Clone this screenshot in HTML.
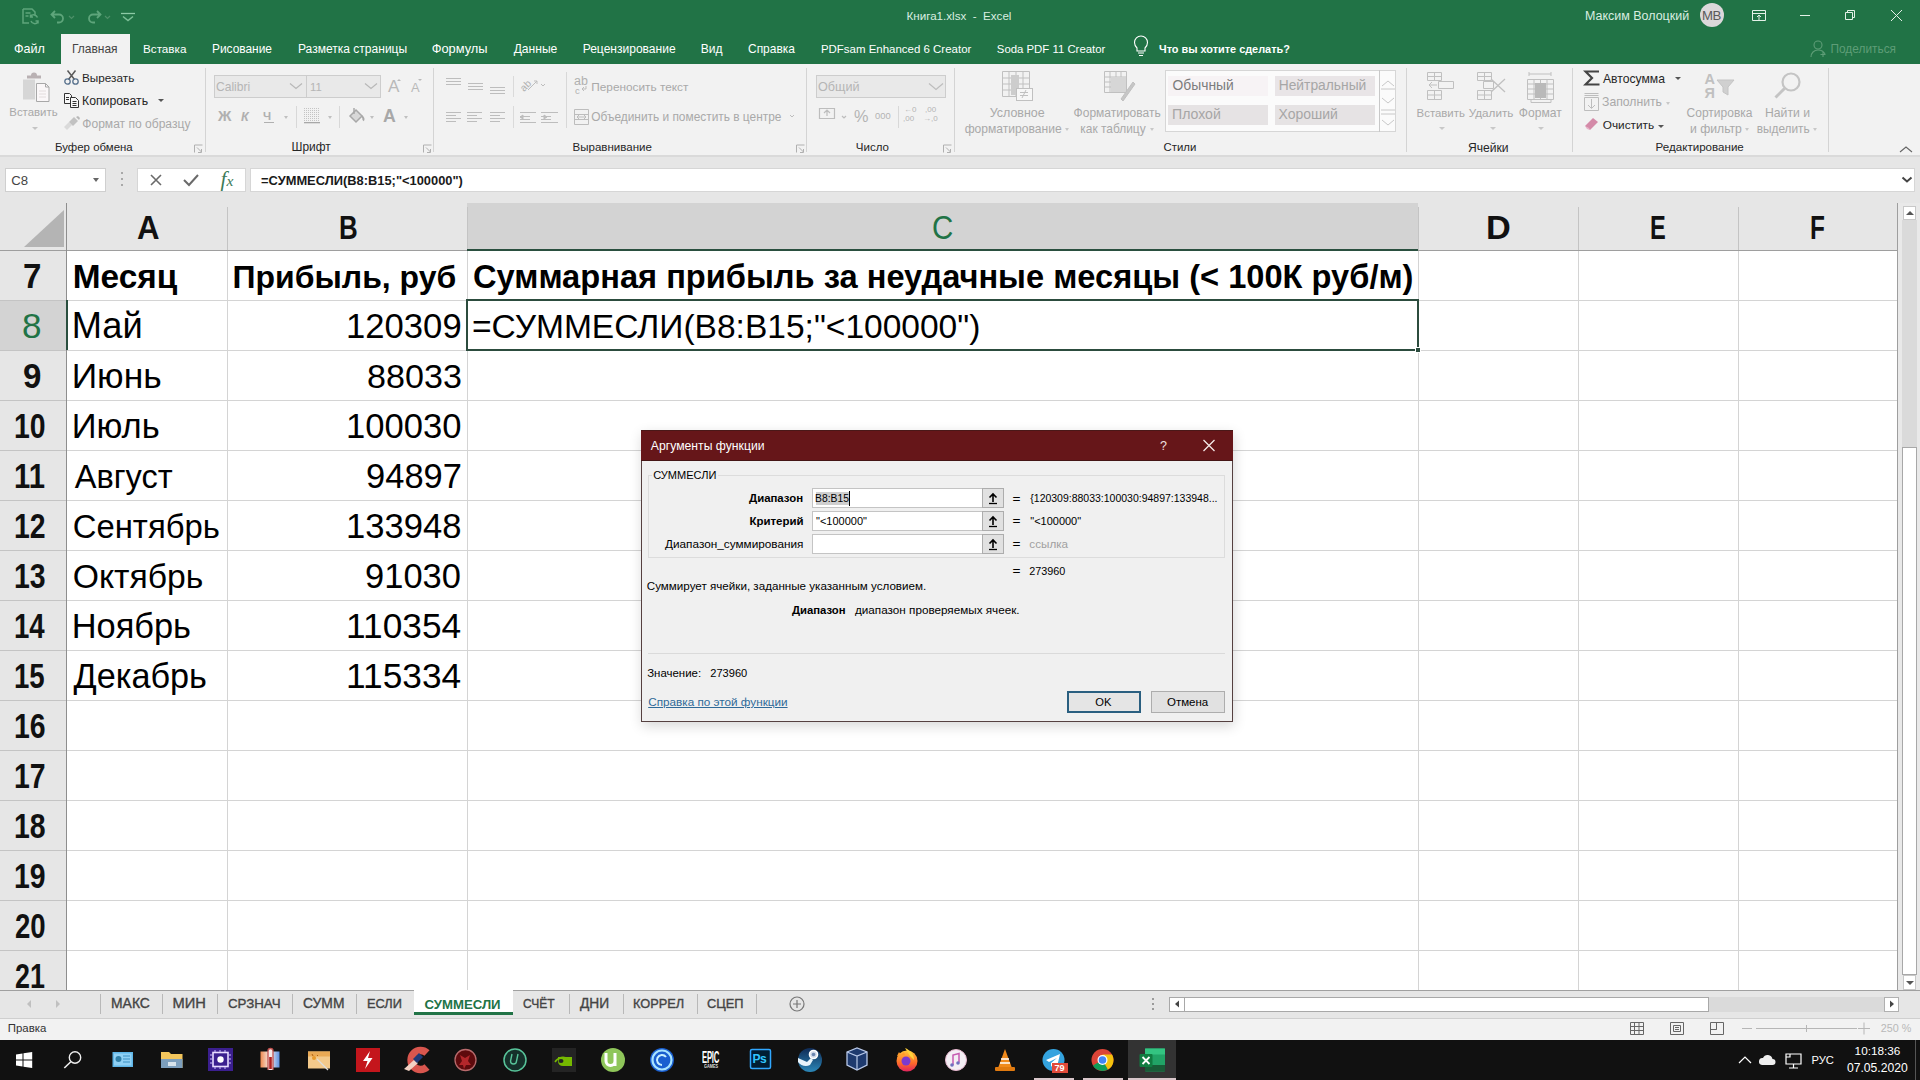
<!DOCTYPE html>
<html><head><meta charset="utf-8"><style>*{margin:0;padding:0;box-sizing:border-box}
html,body{width:1920px;height:1080px;overflow:hidden;background:#fff;font-family:"Liberation Sans",sans-serif}
.a{position:absolute}
.t{position:absolute;white-space:nowrap;line-height:1}
</style></head><body>
<div class="a" style="left:0;top:0;width:1920px;height:64px;background:#217346"></div>
<svg class="a" style="left:0;top:0" width="150" height="30" fill="none" stroke="#5ea57b" stroke-width="1.5">
<path d="M23 9h9l3 3v3 M23 9v14h6 M25.5 13h5 M25.5 16h3"/>
<path d="M37.5 17.5a4 4 0 0 0-7 -1 M30.5 14.5v2.5h2.5 M31 21a4 4 0 0 0 7 1 M38 23.5v-2.5h-2.5"/>
<path d="M52 14.5h7a4 4 0 0 1 0 8h-2 M55 11l-3.5 3.5 3.5 3.5" stroke-width="1.8"/>
<path d="M69 16l2.5 2.5 2.5-2.5" stroke-width="1.2" stroke="#4d9069"/>
<path d="M100 14.5h-7a4 4 0 0 0 0 8h2 M97 11l3.5 3.5-3.5 3.5" stroke-width="1.8"/>
<path d="M105 16l2.5 2.5 2.5-2.5" stroke-width="1.2" stroke="#4d9069"/>
<path d="M121 13.5h14" stroke="#8ccaa5" stroke-width="1.3"/>
<path d="M123 16.5l5 4 5-4" stroke="#7cbf97" stroke-width="1.5"/>
</svg>
<div class="t" style="left:906.50px;top:10.00px;font-size:11.61px;color:#d9eee0;">Книга1.xlsx&nbsp; - &nbsp;Excel</div><div class="t" style="left:1585.00px;top:10.00px;font-size:12.47px;color:#d9eee0;">Максим Волоцкий</div><div class="a" style="left:1700px;top:3px;width:24px;height:24px;border-radius:50%;background:#dcd8da"></div>
<div class="t" style="left:1702.00px;top:9.00px;font-size:13.21px;color:#5a5a5a;letter-spacing:-0.5px">MB</div><svg class="a" style="left:1748px;top:6px" width="170" height="20" viewBox="0 0 170 20" fill="none" stroke="#e4f1e8" stroke-width="1">
<path d="M4.5 4.5h13v10h-13z M4.5 7.5h13 M11 9v5 M9 11l2-2 2 2"/>
<path d="M52 9.5h10"/>
<path d="M97.5 6.5h7v7h-7z M99.5 6.5v-2h7v7h-2"/>
<path d="M143 4l11 11 M154 4l-11 11"/>
</svg>
<div class="a" style="left:61px;top:34px;width:69px;height:30px;background:#f2f2f2"></div>
<div class="t" style="left:14.00px;top:43.00px;font-size:12.57px;color:#fff;">Файл</div><div class="t" style="left:72.00px;top:44.00px;font-size:11.97px;color:#444;">Главная</div><div class="t" style="left:143.00px;top:43.00px;font-size:11.70px;color:#fff;">Вставка</div><div class="t" style="left:212.00px;top:44.00px;font-size:11.91px;color:#fff;">Рисование</div><div class="t" style="left:298.00px;top:43.00px;font-size:12.04px;color:#fff;">Разметка страницы</div><div class="t" style="left:431.70px;top:43.00px;font-size:12.85px;color:#fff;">Формулы</div><div class="t" style="left:513.70px;top:43.00px;font-size:12.09px;color:#fff;">Данные</div><div class="t" style="left:582.70px;top:43.00px;font-size:12.04px;color:#fff;">Рецензирование</div><div class="t" style="left:700.70px;top:43.00px;font-size:12.05px;color:#fff;">Вид</div><div class="t" style="left:748.00px;top:44.00px;font-size:11.96px;color:#fff;">Справка</div><div class="t" style="left:820.90px;top:44.00px;font-size:11.48px;color:#fff;">PDFsam Enhanced 6 Creator</div><div class="t" style="left:996.80px;top:44.00px;font-size:11.38px;color:#fff;">Soda PDF 11 Creator</div><svg class="a" style="left:1132px;top:35px" width="18" height="22" viewBox="0 0 18 22" fill="none" stroke="#fff" stroke-width="1.1">
<path d="M5 13c-2-2-2.5-4-2.5-5.5a6.5 6.5 0 0 1 13 0c0 1.5-.5 3.5-2.5 5.5v3H5v-3z M6 18h6 M7 20.5h4"/>
</svg>
<div class="t" style="left:1159.00px;top:44.00px;font-size:10.90px;color:#fff;font-weight:bold">Что вы хотите сделать?</div><svg class="a" style="left:1810px;top:40px" width="18" height="18" viewBox="0 0 18 18" fill="none" stroke="#5e9d77" stroke-width="1.1">
<circle cx="8" cy="5" r="4"/><path d="M1 17c0-4 3-7 7-7s6 2 7 4 M13 12v5 M10.5 14.5h5"/>
</svg>
<div class="t" style="left:1830.50px;top:44.00px;font-size:11.87px;color:#5e9d77;">Поделиться</div><div class="a" style="left:0;top:64px;width:1920px;height:91px;background:#f2f2f2"></div>
<div class="a" style="left:0;top:64px">
<div class="a" style="left:205px;top:4px;width:1px;height:84px;background:#d4d4d4"></div>
<div class="a" style="left:433px;top:4px;width:1px;height:84px;background:#d4d4d4"></div>
<div class="a" style="left:806px;top:4px;width:1px;height:84px;background:#d4d4d4"></div>
<div class="a" style="left:954px;top:4px;width:1px;height:84px;background:#d4d4d4"></div>
<div class="a" style="left:1406px;top:4px;width:1px;height:84px;background:#d4d4d4"></div>
<div class="a" style="left:1572px;top:4px;width:1px;height:84px;background:#d4d4d4"></div>
<div class="a" style="left:1828px;top:4px;width:1px;height:84px;background:#d4d4d4"></div>
<div class="a" style="left:565.5px;top:8px;width:1px;height:56px;background:#d8d8d8"></div>
<svg class="a" style="left:0;top:0" width="1920" height="91" fill="none" stroke="#b0b0b0" stroke-width="1"><path d="M194.5 88.5v-7.5h8 M197 83.5l4.5 4.5 M201.5 85v3.5h-3.5"/><path d="M423.5 88.5v-7.5h8 M426 83.5l4.5 4.5 M430.5 85v3.5h-3.5"/><path d="M796.5 88.5v-7.5h8 M799 83.5l4.5 4.5 M803.5 85v3.5h-3.5"/><path d="M943.5 88.5v-7.5h8 M946 83.5l4.5 4.5 M950.5 85v3.5h-3.5"/></svg>
<svg class="a" style="left:0;top:0" width="100" height="70" fill="none" stroke-width="1">
<rect x="23" y="15.5" width="12" height="20" fill="#d6d6d6"/>
<path d="M27 14.5h14v-3h-4a3 3 0 0 0-6 0h-4z" fill="#b9b1b3"/>
<path d="M36.5 19.5h9l3.5 3.5v14.5h-12.5z" fill="#faf7f8" stroke="#a8a8a8"/><path d="M45.5 19.5v3.5h3.5" stroke="#a8a8a8"/>
<path d="M39 27h7 M39 30h7 M39 33h7" stroke="#e2dcdc"/>
</svg>
<div class="a" style="left:32px;top:63px;width:0;height:0;border-left:3.0px solid transparent;border-right:3.0px solid transparent;border-top:3px solid #c4c4c4"></div>
<svg class="a" style="left:64px;top:6px" width="16" height="16" viewBox="0 0 16 16" fill="none" stroke="#5a5a5a" stroke-width="1.5">
<path d="M3.5 0.5l7 9 M11.5 0.5l-7 9"/><circle cx="3.5" cy="11.5" r="2.7" stroke="#56708c" stroke-width="1.3"/><circle cx="11.5" cy="11.5" r="2.7" stroke="#56708c" stroke-width="1.3"/>
</svg>
<svg class="a" style="left:64px;top:29px" width="16" height="15" viewBox="0 0 16 15" fill="#f8f8f8" stroke="#333" stroke-width="1">
<path d="M0.5 0.5h5l2 2v8h-7z"/><path d="M2 4.5h3 M2 6.5h3"/><path d="M6.5 4.5h5l3 3v7h-8z"/><path d="M8.5 8.5h4 M8.5 10.5h4 M8.5 12.5h4"/>
</svg>
<div class="a" style="left:158px;top:35px;width:0;height:0;border-left:3.0px solid transparent;border-right:3.0px solid transparent;border-top:3px solid #555"></div>
<svg class="a" style="left:63px;top:52px" width="18" height="14" viewBox="0 0 18 14" fill="#cdcdcd" stroke="none">
<path d="M1 11l5-5 3 3-5 5z" fill="#dadada"/><path d="M6 6l5-5 4 4-5 5z" fill="#c2c2c2"/><path d="M13 1l2-1 2 2-1 2z" fill="#b8b8b8"/>
</svg>
<div class="a" style="left:214px;top:11px;width:167px;height:23px;background:#e9e9e9;border:1px solid #cdcdcd"></div>
<div class="a" style="left:306px;top:11px;width:1px;height:23px;background:#cdcdcd"></div>
<svg class="a" style="left:0;top:0" width="960" height="91" fill="none" stroke="#b8b8b8" stroke-width="1.2">
<path d="M290 19.5l6 5 6-5 M365 19.5l6 5 6-5"/>
</svg>
<svg class="a" style="left:397px;top:14px" width="30" height="6" fill="#b9b9b9"><path d="M0 3l2-2 2 2z M21 1h4l-2 2z"/></svg>
<div class="a" style="left:264px;top:58px;width:10px;height:1px;background:#b0b0b0"></div>
<div class="a" style="left:284px;top:52px;width:0;height:0;border-left:2.5px solid transparent;border-right:2.5px solid transparent;border-top:3px solid #c0c0c0"></div>
<div class="a" style="left:328px;top:52px;width:0;height:0;border-left:2.5px solid transparent;border-right:2.5px solid transparent;border-top:3px solid #c0c0c0"></div>
<div class="a" style="left:370px;top:52px;width:0;height:0;border-left:2.5px solid transparent;border-right:2.5px solid transparent;border-top:3px solid #c0c0c0"></div>
<div class="a" style="left:404px;top:52px;width:0;height:0;border-left:2.5px solid transparent;border-right:2.5px solid transparent;border-top:3px solid #c0c0c0"></div>
<div class="a" style="left:296px;top:42px;width:1px;height:22px;background:#d8d8d8"></div>
<div class="a" style="left:339px;top:42px;width:1px;height:22px;background:#d8d8d8"></div>
<svg class="a" style="left:304px;top:44px" width="17" height="17" fill="#c4c4c4"><rect x="0" y="0" width="1" height="1"/><rect x="2" y="0" width="1" height="1"/><rect x="4" y="0" width="1" height="1"/><rect x="6" y="0" width="1" height="1"/><rect x="8" y="0" width="1" height="1"/><rect x="10" y="0" width="1" height="1"/><rect x="12" y="0" width="1" height="1"/><rect x="14" y="0" width="1" height="1"/><rect x="0" y="2" width="1" height="1"/><rect x="2" y="2" width="1" height="1"/><rect x="4" y="2" width="1" height="1"/><rect x="6" y="2" width="1" height="1"/><rect x="8" y="2" width="1" height="1"/><rect x="10" y="2" width="1" height="1"/><rect x="12" y="2" width="1" height="1"/><rect x="14" y="2" width="1" height="1"/><rect x="0" y="4" width="1" height="1"/><rect x="2" y="4" width="1" height="1"/><rect x="4" y="4" width="1" height="1"/><rect x="6" y="4" width="1" height="1"/><rect x="8" y="4" width="1" height="1"/><rect x="10" y="4" width="1" height="1"/><rect x="12" y="4" width="1" height="1"/><rect x="14" y="4" width="1" height="1"/><rect x="0" y="6" width="1" height="1"/><rect x="2" y="6" width="1" height="1"/><rect x="4" y="6" width="1" height="1"/><rect x="6" y="6" width="1" height="1"/><rect x="8" y="6" width="1" height="1"/><rect x="10" y="6" width="1" height="1"/><rect x="12" y="6" width="1" height="1"/><rect x="14" y="6" width="1" height="1"/><rect x="0" y="8" width="1" height="1"/><rect x="2" y="8" width="1" height="1"/><rect x="4" y="8" width="1" height="1"/><rect x="6" y="8" width="1" height="1"/><rect x="8" y="8" width="1" height="1"/><rect x="10" y="8" width="1" height="1"/><rect x="12" y="8" width="1" height="1"/><rect x="14" y="8" width="1" height="1"/><rect x="0" y="10" width="1" height="1"/><rect x="2" y="10" width="1" height="1"/><rect x="4" y="10" width="1" height="1"/><rect x="6" y="10" width="1" height="1"/><rect x="8" y="10" width="1" height="1"/><rect x="10" y="10" width="1" height="1"/><rect x="12" y="10" width="1" height="1"/><rect x="14" y="10" width="1" height="1"/><rect x="0" y="12" width="1" height="1"/><rect x="2" y="12" width="1" height="1"/><rect x="4" y="12" width="1" height="1"/><rect x="6" y="12" width="1" height="1"/><rect x="8" y="12" width="1" height="1"/><rect x="10" y="12" width="1" height="1"/><rect x="12" y="12" width="1" height="1"/><rect x="14" y="12" width="1" height="1"/><rect x="0" y="14" width="1" height="1"/><rect x="2" y="14" width="1" height="1"/><rect x="4" y="14" width="1" height="1"/><rect x="6" y="14" width="1" height="1"/><rect x="8" y="14" width="1" height="1"/><rect x="10" y="14" width="1" height="1"/><rect x="12" y="14" width="1" height="1"/><rect x="14" y="14" width="1" height="1"/><rect x="0" y="14" width="16" height="1.3" fill="#a8a8a8"/></svg>
<svg class="a" style="left:347px;top:42px" width="18" height="20" fill="none" stroke="#a8a8a8" stroke-width="1.5">
<path d="M3 10l6-6 6 6-6 6z" fill="#d8d8d8"/><path d="M7 2v6" /><path d="M15 10c1.5 2 2 3.5 1 4.5" stroke-width="2"/></svg>
<svg class="a" style="left:0;top:0" width="960" height="91" fill="none" stroke="#bdbdbd" stroke-width="1">
<path d="M446 14.5h15"/><path d="M446 17.5h15"/><path d="M446 20.5h15"/><path d="M468 19.5h15"/><path d="M468 22.5h15"/><path d="M468 25.5h15"/><path d="M490 23.5h15"/><path d="M490 26.5h15"/><path d="M490 29.5h15"/><path d="M446 48.5h15"/><path d="M446 51.5h10"/><path d="M446 54.5h15"/><path d="M446 57.5h10"/><path d="M467 48.5h15"/><path d="M467 51.5h10"/><path d="M467 54.5h15"/><path d="M467 57.5h10"/><path d="M490 48.5h15"/><path d="M490 51.5h10"/><path d="M490 54.5h15"/><path d="M490 57.5h10"/><path d="M520 48.5h16"/><path d="M520 52.5h10"/><path d="M520 55.5h10"/><path d="M520 58.5h16"/><path d="M520 53l3-2v4z" fill="#bdbdbd"/><path d="M541 48.5h17"/><path d="M541 52.5h10"/><path d="M541 55.5h10"/><path d="M541 58.5h17"/><path d="M547 53l-3-2v4z" fill="#bdbdbd"/><text x="0" y="0" transform="translate(524 28) rotate(-45)" font-family="Liberation Sans" font-size="10" fill="#b0b0b0" stroke="none">ab</text><path d="M528 26l9-9 M534 17h3v3"/><path d="M541 20l2 2 2-2"/><path d="M574.5 45.5h14v15h-14z M574.5 50.5h14 M574.5 55.5h14 M577 53h9 M577 53l2-2 M577 53l2 2 M586 53l-2-2 M586 53l-2 2"/><path d="M790 51l2 2 2-2"/><path d="M582 25h4v-3 M584 23l-2 2 2 2"/></svg>
<div class="a" style="left:512.5px;top:12px;width:1px;height:21px;background:#dadada"></div>
<div class="a" style="left:512.5px;top:42px;width:1px;height:22px;background:#dadada"></div>
<div class="a" style="left:816px;top:11px;width:130px;height:23px;background:#e9e9e9;border:1px solid #cdcdcd"></div>
<svg class="a" style="left:0;top:0" width="960" height="91" fill="none" stroke="#bdbdbd" stroke-width="1.2"><path d="M929 19.5l7 6 7-6"/><path d="M819.5 44.5h15v10h-15z M824 49l3-3 3 3 M827 46v6"/><path d="M842 52l2 2 2-2"/><path d="M898.5 42v22" stroke="#d8d8d8" stroke-width="1"/></svg>
<svg class="a" style="left:1002px;top:7px" width="32" height="32" fill="none" stroke="#c0c0c0" stroke-width="1">
<path d="M0.5 0.5h27v25h-27z M0.5 7h27 M0.5 13h27 M0.5 19h27 M7 0.5v25 M14 0.5v25 M21 0.5v25"/>
<rect x="9" y="4" width="8" height="20" fill="#cdcdcd" stroke="none"/>
<rect x="14.5" y="17.5" width="16" height="12" fill="#f7f7f7"/><path d="M18 21.5h8 M18 24.5h8 M24 19l-4 8"/>
</svg>
<svg class="a" style="left:1104px;top:7px" width="32" height="32" fill="none" stroke="#c0c0c0" stroke-width="1">
<path d="M0.5 0.5h22v21h-22z M0.5 6h22 M0.5 11h22 M0.5 16h22 M6 0.5v21 M12 0.5v21 M17 0.5v21"/>
<rect x="7" y="6" width="15" height="15" fill="#d6d6d6" stroke="none"/>
<path d="M17 28l12-17 2 2-12 17z" fill="#c6c6c6"/>
</svg>
<div class="a" style="left:1165px;top:6px;width:231px;height:62px;background:#fbfbfb;border:1px solid #d6d6d6"></div>
<div class="a" style="left:1168px;top:12px;width:100px;height:20px;background:#f7f3f5"></div>
<div class="a" style="left:1275px;top:12px;width:100px;height:20px;background:#e9e5e7"></div>
<div class="a" style="left:1168px;top:40.5px;width:100px;height:20.5px;background:#e6e3e4"></div>
<div class="a" style="left:1275px;top:40.5px;width:100px;height:20.5px;background:#e6e3e4"></div>
<svg class="a" style="left:1379px;top:6px" width="18" height="63" fill="none" stroke="#c8c8c8" stroke-width="1">
<path d="M0.5 0v62 M2 19h14 M2 40h14 M2 44h14 M3 16l6-5 6 5 M3 28l6 5 6-5 M3 50l6 5 6-5"/>
</svg>
<svg class="a" style="left:1427px;top:8px" width="30" height="30" fill="none" stroke="#c0c0c0" stroke-width="1">
<path d="M0.5 0.5h14v8h-14z M7.5 0.5v8 M0.5 4.5h14 M0.5 18.5h14v9h-14z M7.5 18.5v9 M0.5 23h14 M11.5 9.5h15v7h-15z" />
<path d="M10 13h-8 M5 10l-3 3 3 3"/>
</svg>
<svg class="a" style="left:1477px;top:8px" width="32" height="30" fill="none" stroke="#c0c0c0" stroke-width="1">
<path d="M0.5 0.5h14v8h-14z M7.5 0.5v8 M0.5 4.5h14 M0.5 18.5h14v9h-14z M7.5 18.5v9 M0.5 23h14 M6.5 9.5h10v7h-10z"/>
<path d="M14 7l14 13 M28 7l-14 13" stroke-width="1.3"/>
</svg>
<svg class="a" style="left:1526px;top:7px" width="30" height="32" fill="none" stroke="#c0c0c0" stroke-width="1">
<path d="M3 3h22 M3 1v4 M25 1v4 M1.5 8.5h26v20h-26z M1.5 13h26 M1.5 18h26 M1.5 23h26 M8 8.5v20 M14.5 8.5v20 M21 8.5v20 M5 28.5v3h20v-3"/>
<rect x="9" y="12" width="11" height="15" fill="#b9b9b9" stroke="none"/>
</svg>
<div class="a" style="left:1064.5px;top:64px;width:0;height:0;border-left:2.5px solid transparent;border-right:2.5px solid transparent;border-top:3px solid #c8c8c8"></div>
<div class="a" style="left:1150px;top:64px;width:0;height:0;border-left:2.5px solid transparent;border-right:2.5px solid transparent;border-top:3px solid #c8c8c8"></div>
<div class="a" style="left:1745.2px;top:64px;width:0;height:0;border-left:2.5px solid transparent;border-right:2.5px solid transparent;border-top:3px solid #c8c8c8"></div>
<div class="a" style="left:1812.5px;top:64px;width:0;height:0;border-left:2.5px solid transparent;border-right:2.5px solid transparent;border-top:3px solid #c8c8c8"></div>
<div class="a" style="left:1438.5px;top:63px;width:0;height:0;border-left:3.0px solid transparent;border-right:3.0px solid transparent;border-top:3px solid #c8c8c8"></div>
<div class="a" style="left:1489.5px;top:63px;width:0;height:0;border-left:3.0px solid transparent;border-right:3.0px solid transparent;border-top:3px solid #c8c8c8"></div>
<div class="a" style="left:1537.5px;top:63px;width:0;height:0;border-left:3.0px solid transparent;border-right:3.0px solid transparent;border-top:3px solid #c8c8c8"></div>
<div class="a" style="left:1674.5px;top:13px;width:0;height:0;border-left:3.0px solid transparent;border-right:3.0px solid transparent;border-top:3px solid #555"></div>
<svg class="a" style="left:1583px;top:5px" width="18" height="18" fill="none" stroke="#444" stroke-width="2.2" stroke-linejoin="miter"><path d="M16 2.5H2.5l6.5 6.5-6.5 6.5H16.5"/></svg>
<svg class="a" style="left:1584px;top:29px" width="16" height="19" fill="none" stroke="#bdbdbd" stroke-width="1">
<path d="M0.5 0.5h14 M0.5 2.5h14 M0.5 4.5h14v13h-14z M7.5 6v9 M4 12l3.5 3.5 3.5-3.5"/></svg>
<div class="a" style="left:1666px;top:38px;width:0;height:0;border-left:2.5px solid transparent;border-right:2.5px solid transparent;border-top:3px solid #c8c8c8"></div>
<svg class="a" style="left:1584px;top:53px" width="16" height="13" fill="#d48aa8" stroke="none">
<path d="M1 9l8-8 5 4-8 8z" /><path d="M1 9l2 3 3 1 -1 -2z" fill="#e8b3c8"/></svg>
<div class="a" style="left:1658px;top:61px;width:0;height:0;border-left:3.0px solid transparent;border-right:3.0px solid transparent;border-top:3px solid #555"></div>
<svg class="a" style="left:1716px;top:15px" width="20" height="18" fill="#c8c8c8" stroke="#c4c4c4" stroke-width="1"><path d="M1 1h17l-6 7v8l-5-3v-5z" fill="#d0d0d0"/></svg>
<svg class="a" style="left:1772px;top:7px" width="32" height="30" fill="none" stroke="#c4c4c4" stroke-width="2.2"><circle cx="19" cy="11" r="8.5"/><path d="M12.5 17.5l-9 9" stroke-width="3"/></svg>
<svg class="a" style="left:1899px;top:81px" width="14" height="8" fill="none" stroke="#666" stroke-width="1.1"><path d="M1 7l6-5 6 5"/></svg>
</div>
<div class="a" style="left:0;top:155px;width:1920px;height:48px;background:#e6e6e6"></div>
<div class="a" style="left:0;top:155px;width:1920px;height:2px;background:#dadada"></div>
<div class="a" style="left:5px;top:168px;width:101px;height:24px;background:#fff;border:1px solid #cfcfcf"></div>
<div class="a" style="left:93px;top:178px;width:0;height:0;border-left:3.5px solid transparent;border-right:3.5px solid transparent;border-top:4px solid #666"></div>
<svg class="a" style="left:120px;top:170px" width="4" height="20" fill="#a8a8a8"><rect x="1" y="2" width="2" height="2"/><rect x="1" y="8" width="2" height="2"/><rect x="1" y="14" width="2" height="2"/></svg>
<div class="a" style="left:137px;top:168px;width:109px;height:24px;background:#fff;border:1px solid #d6d6d6"></div>
<svg class="a" style="left:148px;top:172px" width="90" height="18" fill="none" stroke="#6a6a6a" stroke-width="1.6"><path d="M3 3l10 10 M13 3l-10 10"/><path d="M36 8l5 5 9-10" stroke-width="2"/></svg>
<div class="a" style="left:250px;top:168px;width:1665px;height:24px;background:#fff;border:1px solid #d6d6d6"></div>
<svg class="a" style="left:1901px;top:176px" width="12" height="8" fill="none" stroke="#444" stroke-width="2"><path d="M1.5 1.5l4.5 4 4.5-4"/></svg>
<div class="a" style="left:0;top:203px;width:1920px;height:787px;background:#fff"></div>
<div class="a" style="left:0;top:203px;width:1898px;height:47px;background:#e6e6e6"></div>
<div class="a" style="left:467px;top:203px;width:951px;height:47px;background:#d3d3d3"></div>
<div class="a" style="left:0;top:250px;width:67px;height:740px;background:#e6e6e6"></div>
<div class="a" style="left:0;top:300px;width:67px;height:50px;background:#d3d3d3"></div>
<svg class="a" style="left:0;top:203px" width="67" height="47"><path d="M24 44h40V7z" fill="#b4b4b4"/></svg>
<div class="a" style="left:227px;top:250px;width:1px;height:740px;background:#d4d4d4"></div>
<div class="a" style="left:227px;top:207px;width:1px;height:43px;background:#c4c4c4"></div>
<div class="a" style="left:467px;top:250px;width:1px;height:740px;background:#d4d4d4"></div>
<div class="a" style="left:467px;top:207px;width:1px;height:43px;background:#c4c4c4"></div>
<div class="a" style="left:1418px;top:250px;width:1px;height:740px;background:#d4d4d4"></div>
<div class="a" style="left:1418px;top:207px;width:1px;height:43px;background:#c4c4c4"></div>
<div class="a" style="left:1578px;top:250px;width:1px;height:740px;background:#d4d4d4"></div>
<div class="a" style="left:1578px;top:207px;width:1px;height:43px;background:#c4c4c4"></div>
<div class="a" style="left:1738px;top:250px;width:1px;height:740px;background:#d4d4d4"></div>
<div class="a" style="left:1738px;top:207px;width:1px;height:43px;background:#c4c4c4"></div>
<div class="a" style="left:1898px;top:250px;width:1px;height:740px;background:#d4d4d4"></div>
<div class="a" style="left:1898px;top:207px;width:1px;height:43px;background:#c4c4c4"></div>
<div class="a" style="left:67px;top:300px;width:1831px;height:1px;background:#d4d4d4"></div>
<div class="a" style="left:0;top:300px;width:67px;height:1px;background:#c4c4c4"></div>
<div class="a" style="left:67px;top:350px;width:1831px;height:1px;background:#d4d4d4"></div>
<div class="a" style="left:0;top:350px;width:67px;height:1px;background:#c4c4c4"></div>
<div class="a" style="left:67px;top:400px;width:1831px;height:1px;background:#d4d4d4"></div>
<div class="a" style="left:0;top:400px;width:67px;height:1px;background:#c4c4c4"></div>
<div class="a" style="left:67px;top:450px;width:1831px;height:1px;background:#d4d4d4"></div>
<div class="a" style="left:0;top:450px;width:67px;height:1px;background:#c4c4c4"></div>
<div class="a" style="left:67px;top:500px;width:1831px;height:1px;background:#d4d4d4"></div>
<div class="a" style="left:0;top:500px;width:67px;height:1px;background:#c4c4c4"></div>
<div class="a" style="left:67px;top:550px;width:1831px;height:1px;background:#d4d4d4"></div>
<div class="a" style="left:0;top:550px;width:67px;height:1px;background:#c4c4c4"></div>
<div class="a" style="left:67px;top:600px;width:1831px;height:1px;background:#d4d4d4"></div>
<div class="a" style="left:0;top:600px;width:67px;height:1px;background:#c4c4c4"></div>
<div class="a" style="left:67px;top:650px;width:1831px;height:1px;background:#d4d4d4"></div>
<div class="a" style="left:0;top:650px;width:67px;height:1px;background:#c4c4c4"></div>
<div class="a" style="left:67px;top:700px;width:1831px;height:1px;background:#d4d4d4"></div>
<div class="a" style="left:0;top:700px;width:67px;height:1px;background:#c4c4c4"></div>
<div class="a" style="left:67px;top:750px;width:1831px;height:1px;background:#d4d4d4"></div>
<div class="a" style="left:0;top:750px;width:67px;height:1px;background:#c4c4c4"></div>
<div class="a" style="left:67px;top:800px;width:1831px;height:1px;background:#d4d4d4"></div>
<div class="a" style="left:0;top:800px;width:67px;height:1px;background:#c4c4c4"></div>
<div class="a" style="left:67px;top:850px;width:1831px;height:1px;background:#d4d4d4"></div>
<div class="a" style="left:0;top:850px;width:67px;height:1px;background:#c4c4c4"></div>
<div class="a" style="left:67px;top:900px;width:1831px;height:1px;background:#d4d4d4"></div>
<div class="a" style="left:0;top:900px;width:67px;height:1px;background:#c4c4c4"></div>
<div class="a" style="left:67px;top:950px;width:1831px;height:1px;background:#d4d4d4"></div>
<div class="a" style="left:0;top:950px;width:67px;height:1px;background:#c4c4c4"></div>
<div class="a" style="left:67px;top:1000px;width:1831px;height:1px;background:#d4d4d4"></div>
<div class="a" style="left:0;top:1000px;width:67px;height:1px;background:#c4c4c4"></div>
<div class="a" style="left:0;top:250px;width:1898px;height:1px;background:#9e9e9e"></div>
<div class="a" style="left:467px;top:249px;width:951px;height:2px;background:#2a4f3f"></div>
<div class="a" style="left:66px;top:203px;width:1px;height:787px;background:#8e8e8e"></div>
<div class="a" style="left:66px;top:300px;width:2px;height:50px;background:#2a4f3f"></div>
<div class="a" style="left:1897px;top:203px;width:1px;height:787px;background:#9e9e9e"></div>
<div class="a" style="left:466px;top:299px;width:953px;height:52px;border:2px solid #2c4c3e"></div>
<div class="a" style="left:1415px;top:347px;width:6px;height:6px;background:#2c4c3e;border:1px solid #fff"></div>
<div class="a" style="left:1898px;top:203px;width:22px;height:787px;background:#e9e9e9"></div>
<div class="a" style="left:1902px;top:220px;width:15px;height:227px;background:#dadada"></div>
<div class="a" style="left:1902px;top:447px;width:15px;height:528px;background:#fff;border:1px solid #a8a8a8"></div>
<div class="a" style="left:1903px;top:206px;width:13px;height:14px;background:#fff;border:1px solid #c8c8c8"></div>
<svg class="a" style="left:1905px;top:209px" width="10" height="8"><path d="M1 6l4-4 4 4z" fill="#555"/></svg>
<div class="a" style="left:1903px;top:975px;width:13px;height:15px;background:#fff;border:1px solid #c8c8c8"></div>
<svg class="a" style="left:1905px;top:979px" width="10" height="8"><path d="M1 2l4 4 4-4z" fill="#555"/></svg>
<div class="a" style="left:0;top:990px;width:1920px;height:28px;background:#e6e6e6"></div>
<div class="a" style="left:0;top:1018px;width:1920px;height:22px;background:#f2f2f2"></div>
<div class="a" style="left:0;top:990px;width:1920px;height:1px;background:#a0a0a0"></div>
<div class="a" style="left:0;top:1018px;width:1920px;height:1px;background:#cfcfcf"></div>
<svg class="a" style="left:24px;top:998px" width="40" height="12" fill="#c0c0c0"><path d="M7 2l-4 4 4 4z M32 2l4 4-4 4z"/></svg>
<div class="a" style="left:100px;top:994px;width:1px;height:20px;background:#b8b8b8"></div>
<div class="a" style="left:161.5px;top:994px;width:1px;height:20px;background:#b8b8b8"></div>
<div class="a" style="left:217px;top:994px;width:1px;height:20px;background:#b8b8b8"></div>
<div class="a" style="left:292px;top:994px;width:1px;height:20px;background:#b8b8b8"></div>
<div class="a" style="left:356px;top:994px;width:1px;height:20px;background:#b8b8b8"></div>
<div class="a" style="left:568.5px;top:994px;width:1px;height:20px;background:#b8b8b8"></div>
<div class="a" style="left:622.5px;top:994px;width:1px;height:20px;background:#b8b8b8"></div>
<div class="a" style="left:697px;top:994px;width:1px;height:20px;background:#b8b8b8"></div>
<div class="a" style="left:755.5px;top:994px;width:1px;height:20px;background:#b8b8b8"></div>
<div class="a" style="left:414px;top:990px;width:99px;height:24px;background:#fff"></div>
<div class="a" style="left:414px;top:1012px;width:99px;height:3px;background:#217346"></div>
<svg class="a" style="left:788px;top:995px" width="18" height="18" fill="none" stroke="#777" stroke-width="1.2"><circle cx="9" cy="9" r="7"/><path d="M9 5v8 M5 9h8"/></svg>
<svg class="a" style="left:1151px;top:997px" width="4" height="14" fill="#9a9a9a"><rect x="1" y="1" width="2" height="2"/><rect x="1" y="6" width="2" height="2"/><rect x="1" y="11" width="2" height="2"/></svg>
<div class="a" style="left:1169px;top:997px;width:715px;height:15px;background:#dadada"></div>
<div class="a" style="left:1169px;top:997px;width:540px;height:15px;background:#fff;border:1px solid #a8a8a8"></div>
<div class="a" style="left:1184px;top:997px;width:1px;height:15px;background:#a8a8a8"></div>
<svg class="a" style="left:1172px;top:999px" width="10" height="10"><path d="M7 1.5l-4 3.5 4 3.5z" fill="#444"/></svg>
<div class="a" style="left:1884px;top:997px;width:15px;height:15px;background:#fff;border:1px solid #b0b0b0"></div>
<svg class="a" style="left:1887px;top:999px" width="10" height="10"><path d="M3 1.5l4 3.5-4 3.5z" fill="#444"/></svg>
<svg class="a" style="left:1628px;top:1020px" width="100" height="18" fill="none" stroke="#666" stroke-width="1">
<path d="M2.5 2.5h13v12h-13z M2.5 6.5h13 M2.5 10.5h13 M6.5 2.5v12 M11 2.5v12"/>
<path d="M42.5 2.5h13v12h-13z M45.5 5.5h7v6h-7z M47 7.5h4 M47 9.5h4"/>
<path d="M82.5 2.5h13v12h-13z M82.5 9.5h6v-7 M88.5 2.5v7"/>
</svg>
<svg class="a" style="left:1740px;top:1020px" width="135" height="18" fill="none" stroke="#b6b6b6" stroke-width="1">
<path d="M2 8.5h10 M16 8.5h101 M66.5 5v7 M118 8.5h12 M124 2.5v12"/>
</svg>
<div class="t" style="left:55.00px;top:142.00px;font-size:11.45px;color:#262626;">Буфер обмена</div><div class="t" style="left:291.50px;top:142.00px;font-size:11.93px;color:#262626;">Шрифт</div><div class="t" style="left:572.50px;top:142.00px;font-size:11.54px;color:#262626;">Выравнивание</div><div class="t" style="left:855.80px;top:142.00px;font-size:11.52px;color:#262626;">Число</div><div class="t" style="left:1163.50px;top:142.00px;font-size:11.37px;color:#262626;">Стили</div><div class="t" style="left:1468.00px;top:142.00px;font-size:12.12px;color:#262626;">Ячейки</div><div class="t" style="left:1655.60px;top:142.00px;font-size:11.59px;color:#262626;">Редактирование</div><div class="t" style="left:9.30px;top:107.00px;font-size:11.40px;color:#a9a9a9;">Вставить</div><div class="t" style="left:82.00px;top:72.00px;font-size:11.75px;color:#262626;">Вырезать</div><div class="t" style="left:82.00px;top:95.00px;font-size:12.28px;color:#262626;">Копировать</div><div class="t" style="left:82.25px;top:118.00px;font-size:12.07px;color:#a9a9a9;">Формат по образцу</div><div class="t" style="left:216.00px;top:81.00px;font-size:12.05px;color:#b5b5b5;">Calibri</div><div class="t" style="left:310.00px;top:82.00px;font-size:11.30px;color:#b5b5b5;">11</div><div class="t" style="left:388.00px;top:78.00px;font-size:17.11px;color:#b9b9b9;">A</div><div class="t" style="left:411.00px;top:82.00px;font-size:12.94px;color:#b9b9b9;">A</div><div class="t" style="left:218.00px;top:109.00px;font-size:14.77px;color:#b0b0b0;font-weight:bold">Ж</div><div class="t" style="left:241.00px;top:111.00px;font-size:12.50px;color:#b0b0b0;font-weight:bold;font-style:italic">К</div><div class="t" style="left:263.00px;top:111.00px;font-size:11.50px;color:#b0b0b0;font-weight:bold">Ч</div><div class="t" style="left:383.00px;top:108.00px;font-size:17.72px;color:#a8a8a8;font-weight:bold">A</div><div class="t" style="left:574.00px;top:75.00px;font-size:12.44px;color:#b0b0b0;">ab</div><div class="t" style="left:575.00px;top:86.00px;font-size:9.50px;color:#b0b0b0;">c</div><div class="t" style="left:591.30px;top:82.00px;font-size:11.82px;color:#a9a9a9;">Переносить текст</div><div class="t" style="left:591.30px;top:112.00px;font-size:11.90px;color:#a9a9a9;">Объединить и поместить в центре</div><div class="t" style="left:818.00px;top:81.00px;font-size:12.63px;color:#b5b5b5;">Общий</div><div class="t" style="left:854.00px;top:108.00px;font-size:16.25px;color:#b4b4b4;">%</div><div class="t" style="left:875.00px;top:112.00px;font-size:9.38px;color:#b4b4b4;">000</div><div class="t" style="left:904.00px;top:106.00px;font-size:8.00px;color:#b4b4b4;">←0</div><div class="t" style="left:903.00px;top:115.00px;font-size:8.00px;color:#b4b4b4;">,00</div><div class="t" style="left:925.00px;top:106.00px;font-size:8.00px;color:#b4b4b4;">,00</div><div class="t" style="left:923.00px;top:115.00px;font-size:8.00px;color:#b4b4b4;">→,0</div><div class="t" style="left:989.70px;top:107.00px;font-size:12.47px;color:#a9a9a9;">Условное</div><div class="t" style="left:964.70px;top:123.00px;font-size:12.08px;color:#a9a9a9;">форматирование</div><div class="t" style="left:1073.60px;top:107.00px;font-size:12.00px;color:#a9a9a9;">Форматировать</div><div class="t" style="left:1080.30px;top:124.00px;font-size:11.94px;color:#a9a9a9;">как таблицу</div><div class="t" style="left:1172.50px;top:79.00px;font-size:13.87px;color:#7c7c7c;">Обычный</div><div class="t" style="left:1278.70px;top:79.00px;font-size:13.82px;color:#a6a6a6;">Нейтральный</div><div class="t" style="left:1172.00px;top:107.00px;font-size:14.10px;color:#a6a6a6;">Плохой</div><div class="t" style="left:1278.50px;top:107.00px;font-size:13.99px;color:#a6a6a6;">Хороший</div><div class="t" style="left:1416.60px;top:108.00px;font-size:11.40px;color:#a9a9a9;">Вставить</div><div class="t" style="left:1468.70px;top:107.00px;font-size:11.73px;color:#a9a9a9;">Удалить</div><div class="t" style="left:1518.80px;top:107.00px;font-size:12.09px;color:#a9a9a9;">Формат</div><div class="t" style="left:1603.00px;top:73.00px;font-size:12.16px;color:#262626;">Автосумма</div><div class="t" style="left:1602.00px;top:96.00px;font-size:12.22px;color:#a9a9a9;">Заполнить</div><div class="t" style="left:1602.70px;top:120.00px;font-size:11.84px;color:#262626;">Очистить</div><div class="t" style="left:1704.50px;top:72.00px;font-size:14.50px;color:#c0c0c0;font-weight:bold">А</div><div class="t" style="left:1704.50px;top:86.00px;font-size:14.50px;color:#c0c0c0;font-weight:bold">Я</div><div class="t" style="left:1686.60px;top:107.00px;font-size:12.01px;color:#a9a9a9;">Сортировка</div><div class="t" style="left:1690.00px;top:123.00px;font-size:12.19px;color:#a9a9a9;">и фильтр</div><div class="t" style="left:1765.00px;top:107.00px;font-size:12.19px;color:#a9a9a9;">Найти и</div><div class="t" style="left:1756.70px;top:124.00px;font-size:11.85px;color:#a9a9a9;">выделить</div><div class="t" style="left:11.30px;top:174.00px;font-size:13.18px;color:#444;">C8</div><div class="t" style="left:220.50px;top:169.00px;font-size:21.67px;color:#3b7a57;font-family:'Liberation Serif',serif;font-style:italic">f<span style="font-size:0.72em">x</span></div><div class="t" style="left:261.00px;top:175.00px;font-size:12.89px;color:#1a1a1a;font-weight:bold">=СУММЕСЛИ(B8:B15;"&lt;100000")</div><div class="t" style="left:136.58px;top:210.00px;font-size:34.00px;color:#111;transform:scaleX(0.9174);transform-origin:0 0;font-weight:bold">A</div><div class="t" style="left:339.18px;top:210.00px;font-size:34.00px;color:#111;transform:scaleX(0.7619);transform-origin:0 0;font-weight:bold">B</div><div class="t" style="left:932.02px;top:210.00px;font-size:34.00px;color:#217346;transform:scaleX(0.8667);transform-origin:0 0;">C</div><div class="t" style="left:1486.28px;top:210.00px;font-size:34.00px;color:#111;transform:scaleX(1.0095);transform-origin:0 0;font-weight:bold">D</div><div class="t" style="left:1650.21px;top:210.00px;font-size:34.00px;color:#111;transform:scaleX(0.6947);transform-origin:0 0;font-weight:bold">E</div><div class="t" style="left:1810.17px;top:210.00px;font-size:34.00px;color:#111;transform:scaleX(0.7167);transform-origin:0 0;font-weight:bold">F</div><div class="t" style="left:23.44px;top:259.00px;font-size:34.50px;color:#111;transform:scaleX(0.9588);transform-origin:0 0;font-weight:bold">7</div><div class="t" style="left:22.46px;top:309.00px;font-size:34.50px;color:#217346;transform:scaleX(1.0188);transform-origin:0 0;">8</div><div class="t" style="left:23.44px;top:359.00px;font-size:34.50px;color:#111;transform:scaleX(0.9588);transform-origin:0 0;font-weight:bold">9</div><div class="t" style="left:13.95px;top:409.00px;font-size:34.50px;color:#111;transform:scaleX(0.8229);transform-origin:0 0;font-weight:bold">10</div><div class="t" style="left:13.91px;top:459.00px;font-size:34.50px;color:#111;transform:scaleX(0.8471);transform-origin:0 0;font-weight:bold">11</div><div class="t" style="left:13.95px;top:509.00px;font-size:34.50px;color:#111;transform:scaleX(0.8229);transform-origin:0 0;font-weight:bold">12</div><div class="t" style="left:13.95px;top:559.00px;font-size:34.50px;color:#111;transform:scaleX(0.8229);transform-origin:0 0;font-weight:bold">13</div><div class="t" style="left:14.00px;top:609.00px;font-size:34.50px;color:#111;transform:scaleX(0.8000);transform-origin:0 0;font-weight:bold">14</div><div class="t" style="left:14.00px;top:659.00px;font-size:34.50px;color:#111;transform:scaleX(0.8000);transform-origin:0 0;font-weight:bold">15</div><div class="t" style="left:13.95px;top:709.00px;font-size:34.50px;color:#111;transform:scaleX(0.8229);transform-origin:0 0;font-weight:bold">16</div><div class="t" style="left:13.95px;top:759.00px;font-size:34.50px;color:#111;transform:scaleX(0.8229);transform-origin:0 0;font-weight:bold">17</div><div class="t" style="left:13.95px;top:809.00px;font-size:34.50px;color:#111;transform:scaleX(0.8229);transform-origin:0 0;font-weight:bold">18</div><div class="t" style="left:13.95px;top:859.00px;font-size:34.50px;color:#111;transform:scaleX(0.8229);transform-origin:0 0;font-weight:bold">19</div><div class="t" style="left:14.80px;top:909.00px;font-size:34.50px;color:#111;transform:scaleX(0.8000);transform-origin:0 0;font-weight:bold">20</div><div class="t" style="left:14.82px;top:959.00px;font-size:34.50px;color:#111;transform:scaleX(0.7784);transform-origin:0 0;font-weight:bold">21</div><div class="t" style="left:72.80px;top:260.00px;font-size:33.38px;color:#000;font-weight:bold">Месяц</div><div class="t" style="left:232.60px;top:261.00px;font-size:31.99px;color:#000;font-weight:bold">Прибыль, руб</div><div class="t" style="left:473.00px;top:261.00px;font-size:32.64px;color:#000;font-weight:bold">Суммарная прибыль за неудачные месяцы (&lt; 100К руб/м)</div><div class="t" style="left:71.70px;top:308.00px;font-size:36.25px;color:#000;">Май</div><div class="t" style="left:346.10px;top:309.00px;font-size:34.63px;color:#000;">120309</div><div class="t" style="left:71.70px;top:359.00px;font-size:35.40px;color:#000;">Июнь</div><div class="t" style="left:367.10px;top:359.00px;font-size:34.09px;color:#000;">88033</div><div class="t" style="left:71.70px;top:409.00px;font-size:34.50px;color:#000;">Июль</div><div class="t" style="left:346.10px;top:409.00px;font-size:34.62px;color:#000;">100030</div><div class="t" style="left:74.70px;top:461.00px;font-size:32.56px;color:#000;">Август</div><div class="t" style="left:366.10px;top:459.00px;font-size:34.47px;color:#000;">94897</div><div class="t" style="left:72.70px;top:511.00px;font-size:32.86px;color:#000;">Сентябрь</div><div class="t" style="left:346.10px;top:509.00px;font-size:34.62px;color:#000;">133948</div><div class="t" style="left:72.70px;top:560.00px;font-size:33.71px;color:#000;">Октябрь</div><div class="t" style="left:365.10px;top:559.00px;font-size:34.47px;color:#000;">91030</div><div class="t" style="left:71.70px;top:609.00px;font-size:34.40px;color:#000;">Ноябрь</div><div class="t" style="left:346.10px;top:608.00px;font-size:35.27px;color:#000;">110354</div><div class="t" style="left:73.50px;top:659.00px;font-size:34.23px;color:#000;">Декабрь</div><div class="t" style="left:346.10px;top:658.00px;font-size:35.27px;color:#000;">115334</div><div class="t" style="left:472.00px;top:310.00px;font-size:33.54px;color:#000;">=СУММЕСЛИ(B8:B15;"&lt;100000")</div><div class="t" style="left:111.00px;top:997.00px;font-size:13.93px;color:#444;-webkit-text-stroke:0.35px #444">МАКС</div><div class="t" style="left:172.50px;top:996.00px;font-size:14.70px;color:#444;-webkit-text-stroke:0.35px #444">МИН</div><div class="t" style="left:228.00px;top:997.00px;font-size:13.32px;color:#444;-webkit-text-stroke:0.35px #444">СРЗНАЧ</div><div class="t" style="left:303.00px;top:997.00px;font-size:13.87px;color:#444;-webkit-text-stroke:0.35px #444">СУММ</div><div class="t" style="left:367.00px;top:998.00px;font-size:12.80px;color:#444;-webkit-text-stroke:0.35px #444">ЕСЛИ</div><div class="t" style="left:523.00px;top:998.00px;font-size:12.03px;color:#444;-webkit-text-stroke:0.35px #444">СЧЁТ</div><div class="t" style="left:580.00px;top:997.00px;font-size:13.79px;color:#444;-webkit-text-stroke:0.35px #444">ДНИ</div><div class="t" style="left:633.00px;top:998.00px;font-size:12.80px;color:#444;-webkit-text-stroke:0.35px #444">КОРРЕЛ</div><div class="t" style="left:707.00px;top:998.00px;font-size:12.80px;color:#444;-webkit-text-stroke:0.35px #444">СЦЕП</div><div class="t" style="left:424.50px;top:998.00px;font-size:13.16px;color:#217346;font-weight:bold">СУММЕСЛИ</div><div class="t" style="left:7.75px;top:1023.00px;font-size:11.41px;color:#333;">Правка</div><div class="t" style="left:1880.70px;top:1023.00px;font-size:10.77px;color:#b8b8b8;">250 %</div><div class="a" style="left:641px;top:430px;width:592px;height:292px;background:#f0f0f0;border:1px solid #554040;box-shadow:1px 4px 12px rgba(0,0,0,0.16)"></div>
<div class="a" style="left:641px;top:430px;width:592px;height:31px;background:#661619;border-top:1px solid #4a1818;border-bottom:1px solid #451515"></div>
<svg class="a" style="left:1202px;top:439px" width="14" height="13" fill="none" stroke="#f4e8e8" stroke-width="1.3"><path d="M1.5 1l11 11 M12.5 1l-11 11"/></svg>
<div class="a" style="left:648px;top:475px;width:577px;height:83px;border:1px solid #dcdcdc"></div>
<div class="a" style="left:652px;top:469px;width:66px;height:12px;background:#f0f0f0"></div>
<div class="a" style="left:812px;top:488px;width:171px;height:20px;background:#fff;border:1px solid #c4c4c4"></div>
<div class="a" style="left:982px;top:488px;width:22px;height:20px;background:#e1e1e1;border:1px solid #adadad"></div>
<svg class="a" style="left:986px;top:491px" width="14" height="14" fill="none" stroke="#000" stroke-width="1.6"><path d="M7 11V3 M3.5 6.5L7 3l3.5 3.5"/><path d="M3 12.5h8" stroke-width="1.3"/></svg>
<div class="a" style="left:812px;top:511px;width:171px;height:20px;background:#fff;border:1px solid #c4c4c4"></div>
<div class="a" style="left:982px;top:511px;width:22px;height:20px;background:#e1e1e1;border:1px solid #adadad"></div>
<svg class="a" style="left:986px;top:514px" width="14" height="14" fill="none" stroke="#000" stroke-width="1.6"><path d="M7 11V3 M3.5 6.5L7 3l3.5 3.5"/><path d="M3 12.5h8" stroke-width="1.3"/></svg>
<div class="a" style="left:812px;top:534px;width:171px;height:20px;background:#fff;border:1px solid #c4c4c4"></div>
<div class="a" style="left:982px;top:534px;width:22px;height:20px;background:#e1e1e1;border:1px solid #adadad"></div>
<svg class="a" style="left:986px;top:537px" width="14" height="14" fill="none" stroke="#000" stroke-width="1.6"><path d="M7 11V3 M3.5 6.5L7 3l3.5 3.5"/><path d="M3 12.5h8" stroke-width="1.3"/></svg>
<div class="a" style="left:816px;top:492px;width:33px;height:13px;background:#cfcfcf"></div>
<div class="a" style="left:849px;top:491px;width:1px;height:15px;background:#000"></div>
<div class="a" style="left:648px;top:653px;width:577px;height:1px;background:#dadada"></div>
<div class="a" style="left:1067px;top:691px;width:74px;height:22px;background:#e5e5e5;border:2px solid #2a5f80"></div>
<div class="a" style="left:1151px;top:691px;width:74px;height:22px;background:#e1e1e1;border:1px solid #adadad"></div>
<div class="t" style="left:650.80px;top:440.00px;font-size:12.21px;color:#fff;">Аргументы функции</div><div class="t" style="left:1160.00px;top:440.00px;font-size:12.50px;color:#f0e0e0;">?</div><div class="t" style="left:653.20px;top:470.00px;font-size:11.06px;color:#000;">СУММЕСЛИ</div><div class="t" style="left:749.00px;top:493.00px;font-size:11.42px;color:#000;font-weight:bold">Диапазон</div><div class="t" style="left:1012.50px;top:492.00px;font-size:13.69px;color:#000;">=</div><div class="t" style="left:1030.30px;top:494.00px;font-size:10.49px;color:#000;">{120309:88033:100030:94897:133948...</div><div class="t" style="left:749.40px;top:516.00px;font-size:11.46px;color:#000;font-weight:bold">Критерий</div><div class="t" style="left:1012.50px;top:514.00px;font-size:13.69px;color:#000;">=</div><div class="t" style="left:1030.30px;top:516.00px;font-size:10.97px;color:#000;">"&lt;100000"</div><div class="t" style="left:665.00px;top:538.00px;font-size:11.79px;color:#000;">Диапазон_суммирования</div><div class="t" style="left:1012.50px;top:537.00px;font-size:13.69px;color:#000;">=</div><div class="t" style="left:1029.30px;top:538.00px;font-size:11.69px;color:#a0a0a0;">ссылка</div><div class="t" style="left:815.00px;top:494.00px;font-size:10.33px;color:#000;">B8:B15</div><div class="t" style="left:816.00px;top:516.00px;font-size:11.00px;color:#000;">"&lt;100000"</div><div class="t" style="left:1012.50px;top:564.00px;font-size:13.69px;color:#000;">=</div><div class="t" style="left:1029.30px;top:566.00px;font-size:10.81px;color:#000;">273960</div><div class="t" style="left:646.80px;top:580.00px;font-size:11.64px;color:#000;">Суммирует ячейки, заданные указанным условием.</div><div class="t" style="left:792.00px;top:605.00px;font-size:11.29px;color:#000;font-weight:bold">Диапазон</div><div class="t" style="left:855.00px;top:604.00px;font-size:11.71px;color:#000;">диапазон проверяемых ячеек.</div><div class="t" style="left:647.20px;top:668.00px;font-size:11.44px;color:#000;">Значение:</div><div class="t" style="left:710.25px;top:668.00px;font-size:11.09px;color:#000;">273960</div><div class="t" style="left:648.20px;top:696.00px;font-size:11.72px;color:#2f6a98;text-decoration:underline">Справка по этой функции</div><div class="t" style="left:1095.25px;top:697.00px;font-size:11.21px;color:#000;">OK</div><div class="t" style="left:1167.00px;top:697.00px;font-size:11.50px;color:#000;">Отмена</div><div class="a" style="left:0;top:1040px;width:1920px;height:40px;background:#111"></div>
<div class="a" style="left:1128px;top:1040px;width:48px;height:40px;background:#333"></div>
<div class="a" style="left:1034px;top:1078px;width:40px;height:2px;background:#d8c6ca"></div>
<div class="a" style="left:1083px;top:1078px;width:40px;height:2px;background:#d8c6ca"></div>
<div class="a" style="left:1128px;top:1078px;width:48px;height:2px;background:#d8c6ca"></div>
<svg class="a" style="left:0;top:1040px" width="1200" height="40">
<path d="M16 14.5l6.5-1v6h-6.5z M23.5 13.3l8.7-1.3v7.5h-8.7z M16 20.5h6.5v6l-6.5-1z M23.5 20.5h8.7v7.5l-8.7-1.3z" fill="#fff"/>
<circle cx="75" cy="17.5" r="5.7" fill="none" stroke="#eee" stroke-width="1.4"/><path d="M70.8 21.7l-6.5 6.3" stroke="#eee" stroke-width="1.6"/>
<rect x="112.5" y="12" width="20.5" height="15" fill="#5fb6e8"/><rect x="114" y="13.5" width="17.5" height="12" fill="#8fd0f4"/><circle cx="118.5" cy="19" r="3" fill="#2f7fa8"/><path d="M123 16h7 M123 19h7 M123 22h7" stroke="#3d8fc2" stroke-width="1.2"/>
<path d="M161 12h8l2 2h11.5v14H161z" fill="#f2c55c"/><rect x="161" y="19" width="21.5" height="9" fill="#7d9fbd"/><rect x="168" y="22" width="8" height="4" fill="#d9e4ec"/>
<rect x="208" y="8" width="25" height="23" fill="#3b1f8f"/><rect x="213" y="12.5" width="15" height="14" fill="none" stroke="#e8dcff" stroke-width="1.6"/><circle cx="220.5" cy="19.5" r="3.2" fill="#fff"/><path d="M210 15h2 M210 19h2 M210 23h2 M229 15h2 M229 19h2 M229 23h2 M215 10v2 M220 10v2 M225 10v2 M215 27v2 M220 27v2 M225 27v2" stroke="#c9b8ff" stroke-width="1"/>
<defs><linearGradient id="th" x1="0" x2="1"><stop offset="0" stop-color="#f08a50"/><stop offset="0.5" stop-color="#f4f0f0"/><stop offset="1" stop-color="#5c8fe0"/></linearGradient><linearGradient id="ff2" x1="0" y1="0" x2="0" y2="1"><stop offset="0" stop-color="#ffc53a"/><stop offset="0.6" stop-color="#ff6a2a"/><stop offset="1" stop-color="#e0245e"/></linearGradient></defs>
<rect x="260.5" y="11.5" width="19" height="16" fill="url(#th)"/><path d="M268 30V11a2.5 2.5 0 0 1 5 0v19" fill="#f6e9e9" stroke="#c0504d" stroke-width="1.3"/><rect x="269.2" y="17" width="2.6" height="12" fill="#b02020"/>
<rect x="308" y="11.5" width="22" height="17" fill="#f3c98b"/><rect x="308" y="11.5" width="22" height="5" fill="#e9a955"/><circle cx="314" cy="18" r="2" fill="#e89a2c"/><path d="M317 19l11 11" stroke="#ddd" stroke-width="1.3"/><path d="M312 14l1 2 M318 15l-1 1" stroke="#b06010" stroke-width="1"/>
<rect x="356" y="8" width="24" height="24" fill="#c4161c"/><path d="M370 11l-7 10h4.5l-2.5 8 7.5-11h-4.5z" fill="#fff"/>
<path d="M427 13a9.5 9.5 0 1 0 0 14" fill="none" stroke="#d9564e" stroke-width="7.5"/><path d="M404 29l10-9 4 3-9 8z" fill="#f2d2c4"/><path d="M413 19l6-6 4 4-6 6z" fill="#203a78"/>
<circle cx="465.5" cy="20" r="10.5" fill="#5e0a0d" stroke="#b86a6c" stroke-width="1.3"/><path d="M460 15l5 3 5-3-2 6 3 4h-5l-2 4-1-4h-4l3-4z" fill="#b3272b"/>
<circle cx="515" cy="20" r="11" fill="#15302a" stroke="#58c49a" stroke-width="1.5"/><path d="M512 14l-1.5 7a3 3 0 0 0 6 0l1.5-7" fill="none" stroke="#58c49a" stroke-width="1.4"/>
<rect x="552" y="8" width="24" height="24" fill="#242424"/><path d="M558 17h14v9h-9c-3 0-5-2-5-4.5z" fill="#76b900"/><path d="M555 22c3-5 9-6 13-3" fill="none" stroke="#76b900" stroke-width="1.5"/><ellipse cx="561" cy="21" rx="2.5" ry="2" fill="#242424"/>
<circle cx="613" cy="20" r="12" fill="#8fc65a"/><path d="M606 13v8a4.5 4.5 0 0 0 9 0v-8 M615 13v13" fill="none" stroke="#fff" stroke-width="3"/>
<circle cx="662" cy="20" r="12" fill="#1a5fd0"/><circle cx="662" cy="20" r="9.5" fill="none" stroke="#a8e4ff" stroke-width="2.2"/><path d="M662 25a5 5 0 1 1 4-8" fill="none" stroke="#c8f0ff" stroke-width="2"/>
<rect x="750.5" y="9.5" width="20" height="19" rx="1.5" fill="#001d34" stroke="#31a8ff" stroke-width="1.5"/>
<defs><linearGradient id="st" x1="0" y1="0" x2="0" y2="1"><stop offset="0" stop-color="#0f2a55"/><stop offset="1" stop-color="#2b87b8"/></linearGradient></defs><circle cx="810" cy="20" r="12" fill="url(#st)"/><circle cx="813.5" cy="14.5" r="4" fill="#cfd8e8" stroke="#fff" stroke-width="1.6"/><circle cx="813.5" cy="14.5" r="1.8" fill="#6a86b0"/><path d="M798 18c3 1 6 3 9 4l4-4 2 2-3 5c-4 2-9 1-12-3z" fill="#e8f4fb"/>
<path d="M847 12l10-4 10 4v13l-10 5-10-5z" fill="#1e3a6e" stroke="#b8c8e8" stroke-width="1.3"/><path d="M847 12l10 4 10-4 M857 16v14" stroke="#b8c8e8" stroke-width="1.2" fill="none"/>
<circle cx="907" cy="21" r="10.5" fill="url(#ff2)"/><path d="M897 16l2-4 2 3 3-3 1 3" fill="#ff9a2a"/><path d="M905 8c5 2 9 6 9 12l-4-4z" fill="#ffd23a"/><circle cx="906" cy="21" r="4.5" fill="#7a3ad0"/>
<circle cx="956" cy="20" r="10.5" fill="#f4eef4" stroke="#e8b8d0" stroke-width="1"/><path d="M953 25V15l6-1.5v9" fill="none" stroke="#c65ab0" stroke-width="1.5"/><circle cx="952" cy="25" r="1.8" fill="#7070c0"/><circle cx="958" cy="23" r="1.8" fill="#7070c0"/>
<path d="M1005 9l-7 19h14z" fill="#f08a1c"/><path d="M1001 19h8 M1000 23h10" stroke="#fff" stroke-width="1.6"/><rect x="995" y="27" width="20" height="4" rx="1" fill="#e07a10"/>
<circle cx="1053.5" cy="20" r="11" fill="#34a3df"/><path d="M1046 20l14-6-3 13-4-3-2 3v-4l6-5-8 4z" fill="#fff"/>
<rect x="1052" y="23" width="16" height="10" fill="#e04a3a"/>
<circle cx="1102.5" cy="20" r="11" fill="#db4437"/><path d="M1102.5 20L1093 25.5A11 11 0 0 0 1108 29.5z" fill="#0f9d58"/><path d="M1102.5 20l5.5 9.5A11 11 0 0 0 1113.5 20z" fill="#f4c20d"/><path d="M1102.5 20h11A11 11 0 0 0 1112 14.5h-9.5z" fill="#f4c20d"/><circle cx="1102.5" cy="20" r="5" fill="#fff"/><circle cx="1102.5" cy="20" r="3.8" fill="#4285f4"/>
<rect x="1145" y="8.5" width="20" height="23" rx="1" fill="#21a366"/><rect x="1145" y="8.5" width="20" height="6" fill="#33c481"/><rect x="1145" y="25" width="20" height="6.5" fill="#185c37"/><rect x="1139.5" y="14" width="13" height="13" rx="1" fill="#107c41"/><path d="M1142.5 17l7 7 M1149.5 17l-7 7" stroke="#fff" stroke-width="1.8"/>
</svg>
<svg class="a" style="left:1735px;top:1048px" width="80" height="24" fill="none" stroke="#fff" stroke-width="1.2">
<path d="M4 15l6-6 6 6"/><path d="M27 17a3.5 3.5 0 0 1 1-7 5 5 0 0 1 9.5 1 3 3 0 0 1 0 6z" fill="#eee" stroke="none"/><path d="M51 6h15v10H51z M58.5 16v4 M54 20h9 M51 6v3h4V6"/></svg>
<div class="a" style="left:1915px;top:1040px;width:1px;height:40px;background:#555"></div>
<div class="t" style="left:702.01px;top:1050.00px;font-size:16.00px;color:#fff;transform:scaleX(0.4853);transform-origin:0 0;font-weight:bold;letter-spacing:-0.5px">EPIC</div><div class="t" style="left:704.00px;top:1064.00px;font-size:5.50px;color:#ddd;transform:scaleX(0.7000);transform-origin:0 0;font-weight:bold">GAMES</div><div class="t" style="left:752.50px;top:1053.00px;font-size:12.07px;color:#31c5ff;font-weight:bold;letter-spacing:-0.5px">Ps</div><div class="t" style="left:1054.50px;top:1064.00px;font-size:9.09px;color:#fff;font-weight:bold">79</div><div class="t" style="left:1811.50px;top:1055.00px;font-size:11.21px;color:#fff;">РУС</div><div class="t" style="left:1854.60px;top:1045.00px;font-size:11.77px;color:#fff;">10:18:36</div><div class="t" style="left:1846.90px;top:1062.00px;font-size:12.15px;color:#fff;">07.05.2020</div></body></html>
